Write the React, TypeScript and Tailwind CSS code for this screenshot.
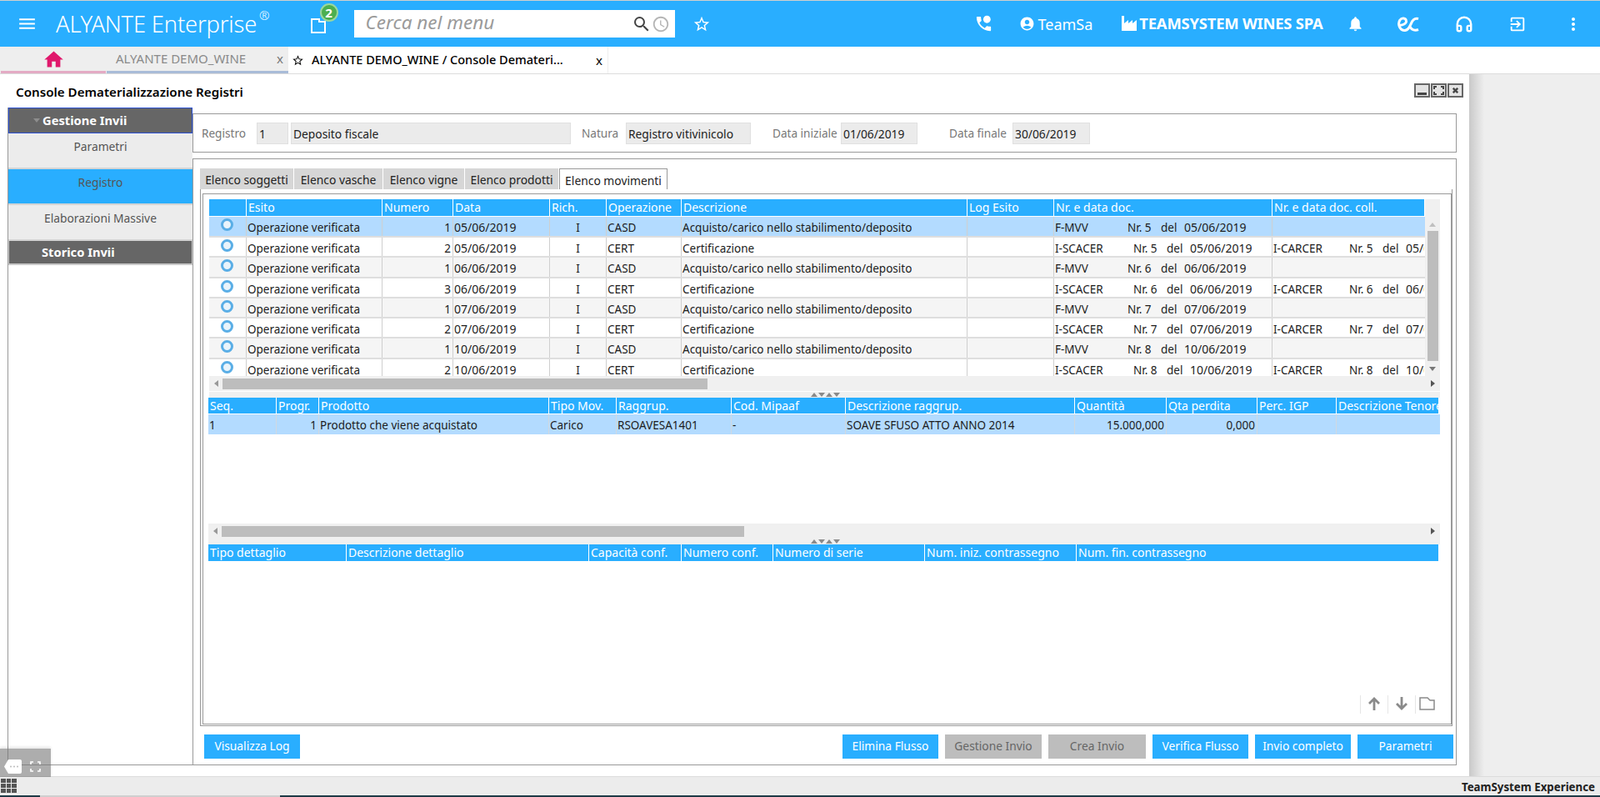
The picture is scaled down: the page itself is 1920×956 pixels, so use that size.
import React from "react";
import {
  MdMenu, MdSearch, MdAccessTime, MdStarBorder, MdAccountCircle, MdNotifications,
  MdExitToApp, MdMoreVert, MdHome,
} from "react-icons/md";
import { LuHeadphones } from "react-icons/lu";

type Align = "l" | "r" | "c";

function Tri({ dir, cls }: { dir: "u" | "d" | "l" | "r"; cls: string }) {
  const pts = { u: "0,6 4,0 8,6", d: "0,0 8,0 4,6", l: "6,0 6,8 0,4", r: "0,0 0,8 6,4" }[dir];
  const box = dir === "u" || dir === "d" ? "0 0 8 6" : "0 0 6 8";
  return (
    <svg viewBox={box} preserveAspectRatio="none" className={cls} fill="currentColor">
      <polygon points={pts} />
    </svg>
  );
}

function Header({ cols, labels }: { cols: number[]; labels: string[] }) {
  return (
    <div className="flex h-full">
      {cols.map((w, i) => (
        <div
          key={i}
          style={{ width: w }}
          className="shrink-0 h-full bg-[#29aeff] border-r border-white pl-[2px] text-white text-[14px] leading-[20px] whitespace-nowrap overflow-hidden"
        >
          {labels[i]}
        </div>
      ))}
    </div>
  );
}

function Cell({ w, align = "l", children, divider = "border-[#cfcfcf]" }: { w: number; align?: Align; children?: React.ReactNode; divider?: string }) {
  const a = align === "r" ? "text-right pr-[2px]" : align === "c" ? "text-center" : "text-left pl-px";
  return (
    <div style={{ width: w }} className={`shrink-0 h-full border-r ${divider} ${a} pt-[3px] whitespace-pre overflow-hidden text-[13.5px] leading-[20px] text-[#1c1c1c]`}>
      {children}
    </div>
  );
}

function Doc({ code, w, nr, date }: { code: string; w: number; nr: string; date: string }) {
  return (
    <>
      <span style={{ width: w }} className="inline-block">{code}</span>
      <span className="inline-block w-[40px]">{`Nr. ${nr}`}</span>
      <span className="inline-block w-[28px]">del</span>
      <span className="text-[14px]">{date}</span>
    </>
  );
}

const MAIN_COLS = [45, 163, 85, 116, 68, 90, 343, 104, 262, 183];
const MAIN_LABELS = ["", "Esito", "Numero", "Data", "Rich.", "Operazione", "Descrizione", "Log Esito", "Nr. e data doc.", "Nr. e data doc. coll."];
const ROW_H = [25, 24, 25, 24, 24, 24, 25, 20];
const CASD = "Acquisto/carico nello stabilimento/deposito";
const CERT = "Certificazione";
const ROWS = [
  { n: "1", d: "05/06/2019", op: "CASD", nr: "5" },
  { n: "2", d: "05/06/2019", op: "CERT", nr: "5" },
  { n: "1", d: "06/06/2019", op: "CASD", nr: "6" },
  { n: "3", d: "06/06/2019", op: "CERT", nr: "6" },
  { n: "1", d: "07/06/2019", op: "CASD", nr: "7" },
  { n: "2", d: "07/06/2019", op: "CERT", nr: "7" },
  { n: "1", d: "10/06/2019", op: "CASD", nr: "8" },
  { n: "2", d: "10/06/2019", op: "CERT", nr: "8" },
];

function HScroll({ thumb, trail }: { thumb: number; trail: number }) {
  return (
    <div className="h-[18px] bg-[#f0f0f0] flex items-center">
      <div className="w-[16px] flex justify-center text-[#999]"><Tri dir="l" cls="w-[5px] h-[8px]" /></div>
      <div style={{ width: thumb }} className="h-[13px] bg-[#bdbdbd]" />
      <div style={{ width: trail }} className="flex justify-end pr-[6px] text-[#555]"><Tri dir="r" cls="w-[5px] h-[8px]" /></div>
    </div>
  );
}

function Splitter({ h }: { h: number }) {
  return (
    <div style={{ height: h }} className="bg-[#f0f0f0] flex items-center justify-center gap-[1px] text-[#8a8a8a] pl-[2px]">
      <Tri dir="u" cls="w-[8px] h-[5px]" />
      <Tri dir="d" cls="w-[8px] h-[5px]" />
      <Tri dir="u" cls="w-[8px] h-[5px]" />
      <Tri dir="d" cls="w-[8px] h-[5px]" />
    </div>
  );
}

function Field({ w, value }: { w: number; value: string }) {
  return (
    <div style={{ width: w }} className="h-[26px] bg-[#ebebeb] border border-[#e0e0e0] pl-[2px] pt-px text-[13.8px] leading-[24px] text-[#1c1c1c] whitespace-nowrap overflow-hidden">
      {value}
    </div>
  );
}

function Label({ w, children }: { w: number; children: React.ReactNode }) {
  return <div style={{ width: w }} className="text-[13.6px] leading-[24px] text-[#777] whitespace-nowrap">{children}</div>;
}

function Btn({ w, off, children }: { w: number; off?: boolean; children: React.ReactNode }) {
  return (
    <div style={{ width: w }} className={`h-[29px] flex items-center justify-center text-[13.8px] ${off ? "bg-[#bdbdbd] text-[#666]" : "bg-[#29aeff] text-white"}`}>
      {children}
    </div>
  );
}

function WinBtn({ children }: { children: React.ReactNode }) {
  return <div className="w-[19px] h-[17px] bg-[#e3e3e3] border-2 border-[#666] flex items-center justify-center text-[#444]">{children}</div>;
}

function SideItem({ active, children }: { active?: boolean; children: React.ReactNode }) {
  return (
    <div className={`h-[43px] border-b-2 border-[#d4d4d4] text-center pt-[7px] text-[13.8px] leading-[18px] ${active ? "bg-[#29aeff] text-[#555]" : "bg-[#ececec] text-[#555]"}`}>
      {children}
    </div>
  );
}

function Tab({ w, active, children }: { w: number; active?: boolean; children: React.ReactNode }) {
  return (
    <div style={{ width: w }} className={`h-[25px] shrink-0 mr-px pt-[3px] text-center text-[13.85px] leading-[22px] text-[#222] whitespace-nowrap ${active ? "bg-white border border-b-0 border-[#999]" : "bg-[#d6d6d6]"}`}>
      {children}
    </div>
  );
}

export default function App() {
  return (
    <div className="relative w-[1920px] h-[956px] overflow-hidden bg-[#eeeeee] flex flex-col font-['Noto_Sans',sans-serif]">
      <div className="h-px bg-[#cfcfcf]" />

      {/* top bar */}
      <header className="h-[55px] bg-[#29aeff] flex items-center text-white font-['Roboto',sans-serif] shrink-0">
        <MdMenu className="ml-[20px] w-[25px] h-[25px]" />
        <div className="ml-[22px] text-[27.4px] font-light tracking-[-0.2px] leading-none whitespace-nowrap">ALYANTE Enterprise</div>
        <div className="ml-[3px] -mt-[20px] text-[15px] font-light leading-none">®</div>
        <div className="relative ml-[48px] w-[20px] h-[20px] mt-[4px]">
          <svg viewBox="0 0 20 20" className="w-[20px] h-[20px]" fill="none" stroke="white" strokeWidth="2">
            <path d="M2 2h9v3h7v13H2z" />
          </svg>
          <div className="absolute -top-[17px] left-[12px] w-[22px] h-[22px] rounded-full bg-[#4caf50] border-2 border-[#9ad79d] text-white text-[15px] font-bold leading-[18px] text-center">2</div>
        </div>
        <div className="ml-[33px] w-[385px] h-[33px] bg-white flex items-center pl-[14px] pr-[6px]">
          <div className="flex-1 text-[22.5px] italic text-[#9a9a9a] leading-none -mt-[3px]">Cerca nel menu</div>
          <MdSearch className="w-[24px] h-[24px] text-[#444]" />
          <MdAccessTime className="w-[22px] h-[22px] text-[#b5b5b5]" />
        </div>
        <MdStarBorder className="ml-[21px] w-[22px] h-[22px]" />
        <svg viewBox="0 0 24 24" className="ml-[316px] w-[23px] h-[23px]" fill="white">
          <path d="M6.62 10.79c1.44 2.83 3.76 5.14 6.59 6.59l2.2-2.2c.27-.27.67-.36 1.02-.24 1.12.37 2.33.57 3.57.57.55 0 1 .45 1 1V20c0 .55-.45 1-1 1-9.39 0-17-7.61-17-17 0-.55.45-1 1-1h3.5c.55 0 1 .45 1 1 0 1.25.2 2.45.57 3.57.11.35.03.74-.25 1.02l-2.2 2.2z" />
          <circle cx="16" cy="6.5" r="4.6" />
        </svg>
        <MdAccountCircle className="ml-[31px] w-[19px] h-[19px]" />
        <div className="ml-[4px] text-[18px] leading-none">TeamSa</div>
        <svg viewBox="0 0 18 18" className="ml-[35px] w-[18px] h-[18px] -mt-[2px]" fill="white">
          <path d="M0 0h3v9l5-4v4l5-4v4l5-4v13H0z" />
        </svg>
        <div className="ml-[3px] text-[18.4px] font-bold leading-none tracking-[-0.2px] whitespace-nowrap">TEAMSYSTEM WINES SPA</div>
        <MdNotifications className="ml-[28px] w-[21px] h-[21px]" />
        <svg viewBox="0 0 26 18" className="ml-[40px] w-[26px] h-[18px]" fill="none" stroke="white" strokeWidth="3">
          <path d="M1.500 10C6 11 11 8 10.500 5 10 1.500 5 1 3 4 0 8 2 16 8 16.500 13 17 14.500 12 16.500 8 18 4 21 1.500 25 2.500" />
          <path d="M15 12c2 4 6 5 10 3.500" />
        </svg>
        <LuHeadphones className="ml-[43px] w-[22px] h-[22px]" strokeWidth={2.6} />
        <MdExitToApp className="ml-[42px] w-[22px] h-[22px]" />
        <MdMoreVert className="ml-[44px] w-[24px] h-[24px]" />
      </header>

      {/* tab strip */}
      <div className="h-[33px] bg-white border-b border-[#dcdcdc] flex shrink-0 font-['Roboto',sans-serif]">
        <div className="w-[346px] flex pl-px bg-[#eeeeee] shrink-0">
          <div className="w-[126px] h-full border-b-[3px] border-[#e4abc4] flex justify-center pt-[4px] mr-[1px]">
            <MdHome className="w-[27px] h-[27px] text-[#e0186c] -mt-[2px]" />
          </div>
          <div className="flex-1 h-full border-b-[3px] border-[#a9bcd8] flex items-center pl-[11px] text-[15px] text-[#8a8a8a]">
            <span className="w-[193px] whitespace-nowrap">ALYANTE DEMO_WINE</span>
            <span className="text-[15px] text-[#777]">x</span>
          </div>
        </div>
        <div className="w-[384px] shrink-0 bg-white border-r border-[#eeeeee] flex items-center pl-[4px] text-[14.5px] font-medium text-black">
          <MdStarBorder className="w-[15px] h-[15px] mr-[9px]" />
          <span className="w-[341px] whitespace-nowrap">ALYANTE DEMO_WINE / Console Demateri...</span>
          <span className="text-[15px] font-normal">x</span>
        </div>
      </div>

      {/* main */}
      <div className="h-[842px] flex shrink-0">
        <main className="w-[1763px] bg-white flex flex-col shrink-0">
          <div className="h-[40px] flex items-start shrink-0">
            <div className="ml-[19px] mt-[11px] text-[15.15px] leading-[20px] font-semibold text-black">Console Dematerializzazione Registri</div>
            <div className="ml-auto mr-[7px] mt-[11px] flex gap-px">
              <WinBtn><div className="w-[11px] h-[3px] bg-[#444] mt-[7px]" /></WinBtn>
              <WinBtn>
                <svg viewBox="0 0 13 11" className="w-[13px] h-[11px]" fill="none" stroke="#444" strokeWidth="2"><path d="M1 4V1h3M9 1h3v3M12 7v3H9M4 10H1V7" /></svg>
              </WinBtn>
              <WinBtn>
                <svg viewBox="0 0 9 9" className="w-[7px] h-[7px]" stroke="#444" strokeWidth="3"><path d="M1 1l7 7M8 1L1 8" /></svg>
              </WinBtn>
            </div>
          </div>

          <div className="flex pl-[9px] h-[789px] shrink-0">
            {/* sidebar */}
            <aside className="w-[222px] h-full border-l border-b border-[#999] flex flex-col shrink-0">
              <div className="h-[31px] bg-[#666] border border-[#2a4fd0] flex items-center text-white text-[14.7px] font-bold">
                <Tri dir="d" cls="ml-[29px] w-[8px] h-[5px] text-[#8d8d8d]" />
                <span className="ml-[3px]">Gestione Invii</span>
              </div>
              <SideItem>Parametri</SideItem>
              <SideItem active>Registro</SideItem>
              <SideItem>Elaborazioni Massive</SideItem>
              <div className="h-[29px] bg-[#666] border-b-2 border-x border-[#c9c9c9] flex items-center pl-[39px] text-white text-[14.7px] font-bold">Storico Invii</div>
            </aside>

            <div className="w-[1517px] shrink-0 flex flex-col">
              {/* form */}
              <div className="mt-[7px] h-[47px] border border-[#999] flex items-center pl-[10px] shrink-0">
                <Label w={66}>Registro</Label>
                <Field w={38} value="1" />
                <div className="w-[3px]" />
                <Field w={336} value="Deposito fiscale" />
                <div className="w-[13px]" />
                <Label w={53}>Natura</Label>
                <Field w={150} value="Registro vitivinicolo" />
                <div className="w-[26px]" />
                <Label w={82}>Data iniziale</Label>
                <Field w={92} value="01/06/2019" />
                <div className="w-[38px]" />
                <Label w={76}>Data finale</Label>
                <Field w={93} value="30/06/2019" />
              </div>

              {/* details panel */}
              <div className="mt-[7px] h-[728px] border border-[#999] flex flex-col shrink-0">
                <div className="pl-[8px] pt-[11px] flex h-[36px] shrink-0">
                  <Tab w={112}>Elenco soggetti</Tab>
                  <Tab w={106}>Elenco vasche</Tab>
                  <Tab w={97}>Elenco vigne</Tab>
                  <Tab w={112}>Elenco prodotti</Tab>
                  <Tab w={130} active>Elenco movimenti</Tab>
                </div>

                <div className="ml-[8px] w-[1503px] h-[644px] border-x border-b border-[#999] pt-[5px] pl-[2px] pb-px shrink-0">
                  <div className="h-full border border-[#999] pt-[6px] pl-[6px] pr-[13px] flex flex-col">
                    {/* movements grid */}
                    <div className="flex h-[212px] pl-px shrink-0">
                      <div className="w-[1459px] shrink-0 flex flex-col overflow-hidden">
                        <div className="h-[21px] pb-px shrink-0"><Header cols={MAIN_COLS} labels={MAIN_LABELS} /></div>
                        {ROWS.map((r, i) => (
                          <div
                            key={i}
                            style={{ height: ROW_H[i] }}
                            className={`flex shrink-0 ${i === 7 ? "" : "border-b-2 border-[#dedede]"} ${i === 0 ? "bg-[#b3dbff]" : i % 2 === 0 ? "bg-[#f5f5f5]" : "bg-white"}`}
                          >
                            <Cell w={MAIN_COLS[0]}>
                              <div className="ml-[13px] -mt-[1px] w-[15px] h-[15px] rounded-full border-[3px] border-[#5aaee6] bg-[#eaf4fb]" />
                            </Cell>
                            <Cell w={MAIN_COLS[1]}>Operazione verificata</Cell>
                            <Cell w={MAIN_COLS[2]} align="r">{r.n}</Cell>
                            <Cell w={MAIN_COLS[3]}><span className="text-[14px]">{r.d}</span></Cell>
                            <Cell w={MAIN_COLS[4]} align="c">I</Cell>
                            <Cell w={MAIN_COLS[5]}>{r.op}</Cell>
                            <Cell w={MAIN_COLS[6]}>{r.op === "CASD" ? CASD : CERT}</Cell>
                            <Cell w={MAIN_COLS[7]} />
                            <Cell w={MAIN_COLS[8]}>
                              {r.op === "CASD" ? <Doc code="F-MVV" w={87} nr={r.nr} date={r.d} /> : <Doc code="I-SCACER" w={94} nr={r.nr} date={r.d} />}
                            </Cell>
                            <Cell w={MAIN_COLS[9]} divider="border-transparent">
                              {r.op === "CERT" ? <Doc code="I-CARCER" w={91} nr={r.nr} date={r.d} /> : null}
                            </Cell>
                          </div>
                        ))}
                      </div>
                      <div className="w-[18px] shrink-0 bg-[#f0f0f0] flex flex-col items-center">
                        <div className="h-[38px] shrink-0 flex items-end justify-center pb-[5px] text-[#c0c0c0]"><Tri dir="u" cls="w-[8px] h-[5px]" /></div>
                        <div className="w-[13px] h-[156px] bg-[#bdbdbd] shrink-0" />
                        <div className="mt-[7px] text-[#777]"><Tri dir="d" cls="w-[8px] h-[5px]" /></div>
                      </div>
                    </div>
                    <div className="pl-px shrink-0"><HScroll thumb={582} trail={879} /></div>
                    <div className="border-t border-white pl-px shrink-0"><Splitter h={7} /></div>

                    {/* product grid */}
                    <div className="h-[19px] shrink-0">
                      <Header
                        cols={[82, 51, 276, 81, 138, 137, 275, 110, 109, 95, 123]}
                        labels={["Seq.", "Progr.", "Prodotto", "Tipo Mov.", "Raggrup.", "Cod. Mipaaf", "Descrizione raggrup.", "Quantità", "Qta perdita", "Perc. IGP", "Descrizione Tenore"]}
                      />
                    </div>
                    <div className="mt-px h-[24px] flex bg-[#b3dbff] shrink-0">
                      <Cell w={82} divider="border-[#d0d8e0]">1</Cell>
                      <Cell w={51} align="r" divider="border-[#d0d8e0]">1</Cell>
                      <Cell w={276} divider="border-[#d0d8e0]">Prodotto che viene acquistato</Cell>
                      <Cell w={81} divider="border-[#d0d8e0]">Carico</Cell>
                      <Cell w={138} divider="border-[#d0d8e0]">RSOAVESA1401</Cell>
                      <Cell w={137} divider="border-[#d0d8e0]">-</Cell>
                      <Cell w={275} divider="border-[#d0d8e0]">SOAVE SFUSO ATTO ANNO 2014</Cell>
                      <Cell w={110} align="r" divider="border-[#d0d8e0]">15.000,000</Cell>
                      <Cell w={109} align="r" divider="border-[#d0d8e0]">0,000</Cell>
                      <Cell w={95} divider="border-[#d0d8e0]" />
                      <Cell w={123} divider="border-transparent" />
                    </div>
                    <div className="h-[107px] shrink-0" />
                    <HScroll thumb={627} trail={835} />
                    <Splitter h={7} />

                    {/* detail grid */}
                    <div className="h-[20px] shrink-0">
                      <Header
                        cols={[166, 291, 111, 110, 182, 182, 435]}
                        labels={["Tipo dettaglio", "Descrizione dettaglio", "Capacità conf.", "Numero conf.", "Numero di serie", "Num. iniz. contrassegno", "Num. fin. contrassegno"]}
                      />
                    </div>

                    <div className="mt-auto mb-[12px] flex justify-end items-center text-[#8a8a8a] mr-[6px]">
                      <div className="w-[33px] h-[22px] border-l border-[#e6e6e6] flex justify-center">
                        <svg viewBox="0 0 20 20" className="w-[20px] h-[20px]" fill="none" stroke="currentColor" strokeWidth="2.8"><path d="M10 18V4M4 10l6-6 6 6" /></svg>
                      </div>
                      <div className="w-[33px] h-[22px] border-l border-[#e6e6e6] flex justify-center">
                        <svg viewBox="0 0 20 20" className="w-[20px] h-[20px]" fill="none" stroke="currentColor" strokeWidth="2.8"><path d="M10 2v14M4 10l6 6 6-6" /></svg>
                      </div>
                      <div className="w-[24px] h-[22px] border-l border-[#e6e6e6] flex justify-end">
                        <svg viewBox="0 0 19 16" className="w-[19px] h-[16px] mt-[2px]" fill="none" stroke="#8a8a8a" strokeWidth="1.5"><path d="M1 1h9l3 3h5v11H1z" /></svg>
                      </div>
                    </div>
                  </div>
                </div>

                <div className="flex pl-[13px] pt-[10px] pr-[3px]">
                  <Btn w={115}>Visualizza Log</Btn>
                  <div className="ml-auto flex gap-[8px]">
                    <Btn w={115}>Elimina Flusso</Btn>
                    <Btn w={116} off>Gestione Invio</Btn>
                    <Btn w={117} off>Crea Invio</Btn>
                    <Btn w={115}>Verifica Flusso</Btn>
                    <Btn w={115}>Invio completo</Btn>
                    <Btn w={115}>Parametri</Btn>
                  </div>
                </div>
              </div>
            </div>
          </div>
        </main>
        <div className="w-[18px] bg-linear-to-r from-[#c9c9c9] to-[#eeeeee] shrink-0" />
      </div>

      {/* status bar */}
      <footer className="h-[23px] bg-[#ececec] border-t border-[#dcdcdc] flex items-start shrink-0">
        <div className="ml-px mt-[2px] grid grid-cols-3 gap-[1px] w-[19px]">
          {Array.from({ length: 9 }).map((_, i) => <div key={i} className="h-[5px] bg-[#555]" />)}
        </div>
        <div className="ml-auto mr-[6px] mt-[3px] text-[13.3px] font-bold text-[#222] leading-[18px]">TeamSystem Experience</div>
      </footer>
      <div className="h-[2px] bg-[#1e3a46] flex shrink-0">
        <div className="ml-[48px] w-[288px] bg-[#cfcfcf]" />
      </div>

      {/* floating chat widget */}
      <div className="absolute left-0 top-[898px] w-[61px] h-[34px] bg-[#777]/60 shadow-[0_-2px_3px_rgba(0,0,0,0.1)] flex items-center">
        <svg viewBox="0 0 21 17" className="ml-[5px] w-[21px] h-[17px] mt-[8px]" fill="white">
          <path d="M5 0h14a2 2 0 0 1 2 2v13a2 2 0 0 1-2 2H5L0 8.500z" />
          <circle cx="8" cy="8.500" r="1" fill="#bbb" /><circle cx="12" cy="8.500" r="1" fill="#bbb" /><circle cx="16" cy="8.500" r="1" fill="#bbb" />
        </svg>
        <svg viewBox="0 0 13 13" className="ml-[10px] w-[13px] h-[13px] mt-[8px]" fill="none" stroke="white" strokeWidth="1.6">
          <path d="M1 4V1h3M9 1h3v3M12 9v3H9M4 12H1V9" />
        </svg>
      </div>
    </div>
  );
}
